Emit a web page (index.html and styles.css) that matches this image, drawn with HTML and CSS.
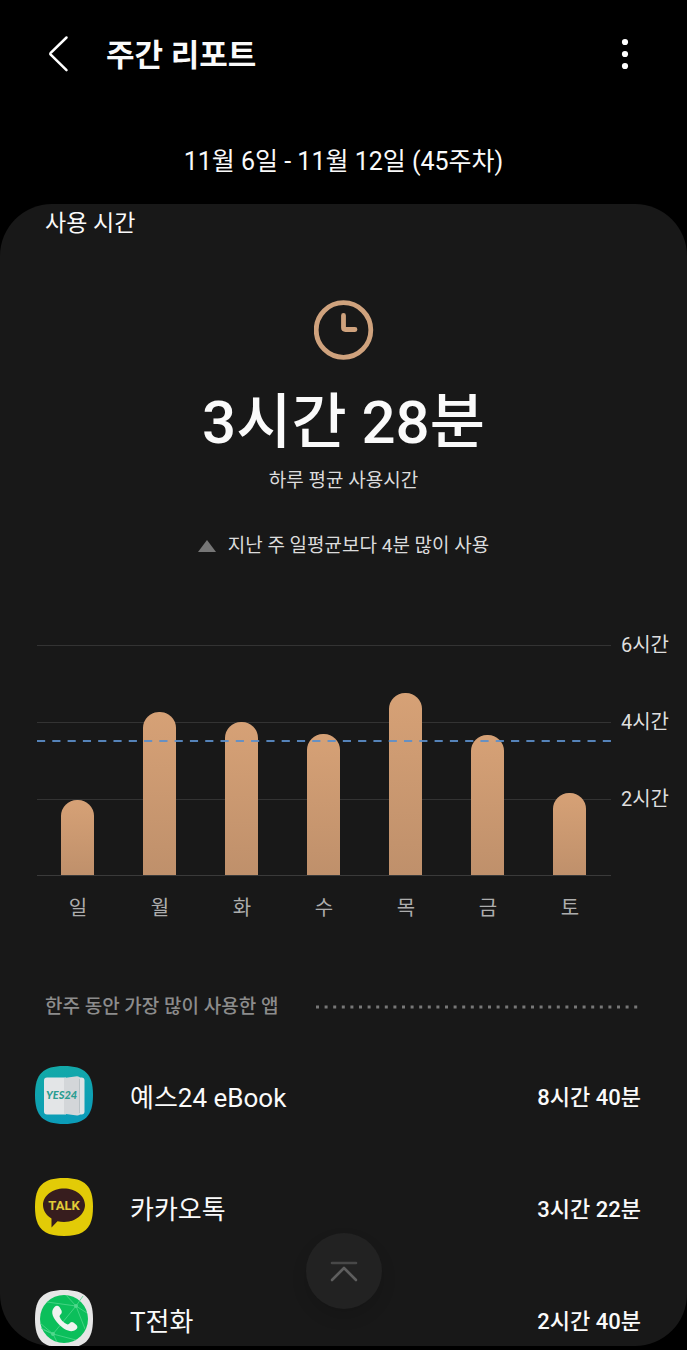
FILE: index.html
```html
<!DOCTYPE html>
<html lang="ko">
<head>
<meta charset="utf-8">
<meta name="viewport" content="width=device-width, initial-scale=1">
<title>주간 리포트</title>
<link rel="stylesheet" href="styles.css">
</head>
<body>
<div class="screen">
  <header class="app-bar">
    <button class="icon-button" type="button" aria-label="뒤로">
      <svg width="40" height="40" viewBox="0 0 40 40"><path d="M26.500 3.500 10.500 19.200Q10 19.800 10.500 20.400L26.500 36.200" fill="none" stroke="#fff" stroke-width="2.500" stroke-linecap="round"/></svg>
    </button>
    <h1 class="app-title">주간 리포트</h1>
    <button class="icon-button" type="button" aria-label="더보기">
      <svg width="40" height="40" viewBox="0 0 40 40" fill="#fff"><circle cx="20" cy="8" r="3.100"/><circle cx="20" cy="20" r="3.100"/><circle cx="20" cy="32" r="3.100"/></svg>
    </button>
  </header>
  <p class="period">11월 6일 - 11월 12일 (45주차)</p>

  <main class="card">
    <h2 class="card-title">사용 시간</h2>

    <section class="summary">
      <svg class="clock" width="60" height="60" viewBox="0 0 60 60" fill="none" stroke="#cfa27d"><circle cx="29.500" cy="30" r="27.300" stroke-width="4.800"/><path d="M29.500 15.500V27.500Q29.500 29.500 31.500 29.500H41" stroke-width="4.800" stroke-linecap="round"/></svg>
      <p class="total">3시간 28분</p>
      <p class="caption">하루 평균 사용시간</p>
      <p class="trend"><svg width="18" height="12" viewBox="0 0 18 12"><path d="M9 0 18 12H0Z" fill="#767676"/></svg>지난 주 일평균보다 4분 많이 사용</p>
    </section>

    <section class="chart" aria-label="요일별 사용 시간">
      <div class="plot">
        <div class="bars">
          <div class="bar" style="height:32.6%"></div>
          <div class="bar" style="height:70.9%"></div>
          <div class="bar" style="height:66.5%"></div>
          <div class="bar" style="height:61.3%"></div>
          <div class="bar" style="height:79.1%"></div>
          <div class="bar" style="height:60.9%"></div>
          <div class="bar" style="height:35.7%"></div>
        </div>
        <svg class="average" width="100%" height="2"><line x1="0" y1="1" x2="100%" y2="1" pathLength="563" stroke="#5c8fcb" stroke-width="2" stroke-dasharray="8 7"/></svg>
      </div>
      <div class="scale"><span>6시간</span><span>4시간</span><span>2시간</span></div>
      <div class="days"><span>일</span><span>월</span><span>화</span><span>수</span><span>목</span><span>금</span><span>토</span></div>
    </section>

    <section>
      <div class="section-head">
        <h3 class="section-title">한주 동안 가장 많이 사용한 앱</h3>
        <svg class="dots" height="4"><line x1="2" y1="2" x2="100%" y2="2" stroke="#777" stroke-width="3" stroke-dasharray="3 5.600"/></svg>
      </div>
      <ul class="apps">
        <li class="app">
          <svg class="app-icon" viewBox="0 0 58 58">
            <defs><linearGradient id="teal" x1="0" y1="0" x2="0.300" y2="1"><stop offset="0" stop-color="#14aba6"/><stop offset="1" stop-color="#0b9cb8"/></linearGradient></defs>
            <path d="M29 0C50 0 58 8 58 29S50 58 29 58 0 50 0 29 8 0 29 0Z" fill="url(#teal)"/>
            <path d="M40 11.500H46.500Q49.500 11.500 49.500 14.500V45.500Q49.500 48.500 46.500 48.500H40Z" fill="#dfe3e5"/>
            <path d="M12 11.500H31V48.500H12Q9 48.500 9 45.500V14.500Q9 11.500 12 11.500Z" fill="#e3e5e7"/>
            <path d="M29 12 42 10.300Q45 10.300 45 13V47Q45 49.700 42 49.500L29 47.800Z" fill="#d3d6d9"/>
            <path d="M44.500 13V47" stroke="#b9c2c6" fill="none"/>
            <text x="11" y="33" class="yes24">YES24</text>
          </svg>
          <span class="app-name">예스24 eBook</span><span class="app-time">8시간 40분</span>
        </li>
        <li class="app">
          <svg class="app-icon" viewBox="0 0 58 58">
            <path d="M29 0C50 0 58 8 58 29S50 58 29 58 0 50 0 29 8 0 29 0Z" fill="#e2cb07"/>
            <path d="M29 10.500C40.500 10.500 50 17.800 50 27S40.500 44 29 44Q25.500 44 22.500 43.300L16.500 49.500 16.500 40.500C11.500 37.500 8 32.700 8 27 8 17.800 17.500 10.500 29 10.500Z" fill="#371d1e"/>
            <text x="29" y="32" class="talk" text-anchor="middle">TALK</text>
          </svg>
          <span class="app-name">카카오톡</span><span class="app-time">3시간 22분</span>
        </li>
        <li class="app">
          <svg class="app-icon" viewBox="0 0 58 58">
            <path d="M29 0C50 0 58 8 58 29S50 58 29 58 0 50 0 29 8 0 29 0Z" fill="#e6e6e6"/>
            <circle cx="29" cy="29" r="24" fill="#0bbf5b"/>
            <path d="M12 12 41 16 52 23M31 5 41 16 48 6M41 16 50 39M41 16 18 44 6 38M18 44 9 40M18 44 22 52M5 33 18 44 41 50" stroke="#52d78d" stroke-width=".8" fill="none"/>
            <circle cx="41" cy="16" r="2" fill="#52d78d"/><circle cx="18" cy="44" r="2" fill="#52d78d"/>
            <path d="M19.500 17Q22 14.500 24.500 17L26.500 20.500Q27.500 23 25 25L24.500 26.500Q26.500 32 32.500 34.500L34 34Q36 31 38.500 32.500L41.500 35Q43.500 37.500 41 39.500C36 43.500 29 39.500 24 34.500 18.500 28.500 14.500 22 19.500 17Z" fill="#f0f3f0"/>
          </svg>
          <span class="app-name">T전화</span><span class="app-time">2시간 40분</span>
        </li>
      </ul>
    </section>
  </main>

  <button class="to-top" type="button" aria-label="맨 위로">
    <svg width="30" height="24" viewBox="0 0 30 24" fill="none" stroke-width="2.600" stroke-linecap="round" stroke-linejoin="round"><path d="M3 4H27" stroke="#484848"/><path d="M3 21 15 9 27 21" stroke="#5e5e5e"/></svg>
  </button>
</div>
</body>
</html>
```
FILE: styles.css
```css
* { box-sizing: border-box; }

body {
  margin: 0;
  background: #000;
  color: #fafafa;
  font-family: Roboto, "Noto Sans CJK KR", sans-serif;
}

h1, h2, h3, p, ul { margin: 0; padding: 0; }

button {
  padding: 0;
  border: 0;
  background: none;
  color: inherit;
  cursor: pointer;
}

svg { display: block; }

.screen {
  position: relative;
  display: flex;
  flex-direction: column;
  height: 100vh;
  padding-bottom: 4px;
}

.app-bar {
  display: flex;
  align-items: center;
  height: 108px;
  flex: none;
  padding: 0 42px 0 40px;
}

.icon-button { width: 40px; height: 40px; }

.app-title {
  flex: 1;
  padding: 4px 0 0 26px;
  font-size: 31px;
  line-height: 40px;
  font-weight: 700;
}

.period {
  flex: none;
  padding: 34px 0 22px;
  font-size: 25px;
  line-height: 40px;
  text-align: center;
}

.card {
  flex: 1;
  min-height: 0;
  overflow-y: auto;
  scrollbar-width: none;
  border-radius: 52px;
  background: #181818;
}

.card-title {
  padding: 2px 0 0 45px;
  font-size: 23px;
  line-height: 36px;
  font-weight: 400;
}

.summary {
  display: flex;
  flex-direction: column;
  align-items: center;
  padding-top: 58px;
}

.total {
  padding-top: 27px;
  font-size: 60px;
  line-height: 72px;
  font-weight: 500;
}

.caption, .trend {
  color: #dcdcdc;
  font-size: 19px;
  line-height: 24px;
}

.caption { padding-top: 10px; }

.trend {
  display: flex;
  align-items: center;
  gap: 12px;
  padding-top: 41px;
}

.chart {
  display: grid;
  grid-template-columns: 1fr auto;
  column-gap: 10px;
  padding: 87px 18px 0 37px;
}

.plot {
  position: relative;
  height: 231px;
  border-bottom: 1px solid #3a3a3a;
  background: linear-gradient(#333 1px, transparent 1px) 0 0 / 100% 77px;
}

.bars, .days {
  display: grid;
  grid-template-columns: repeat(7, 1fr);
  justify-items: center;
}

.bars { height: 100%; align-items: end; }

.bar {
  width: 33px;
  border-radius: 16px 16px 0 0;
  background: linear-gradient(#d6a176, #bf906b);
}

.average {
  position: absolute;
  left: 0;
  bottom: 133px;
  opacity: 0.9;
}

.scale {
  display: grid;
  grid-template-rows: repeat(3, 77px);
  margin-top: -15px;
  color: #dedede;
  font-size: 20px;
  line-height: 30px;
}

.days {
  padding-top: 17px;
  color: #adadad;
  font-size: 20px;
  line-height: 30px;
}

.section-head {
  display: flex;
  align-items: center;
  gap: 36px;
  padding: 69px 48px 17px 45px;
}

.section-title {
  color: #8c8c8c;
  font-size: 19px;
  line-height: 30px;
  font-weight: 500;
}

.dots { flex: 1; min-width: 0; }

.apps { list-style: none; }

.app {
  display: flex;
  align-items: center;
  height: 112px;
  padding: 0 46px 0 35px;
}

.app-icon { width: 58px; height: 58px; }

.yes24 {
  fill: #2a9d91;
  font: italic 900 11px Lato, sans-serif;
}

.talk {
  fill: #e2cb37;
  font: 700 13px Roboto, sans-serif;
}

.app-name {
  flex: 1;
  padding-left: 37px;
  font-size: 26px;
}

.app-time {
  font-size: 22px;
  font-weight: 500;
}

.to-top {
  position: absolute;
  left: 50%;
  bottom: 41px;
  display: grid;
  place-items: center;
  width: 76px;
  height: 76px;
  margin-left: -38px;
  border-radius: 50%;
  background: #222;
  box-shadow: 0 8px 16px rgba(0, 0, 0, 0.12);
}
```
